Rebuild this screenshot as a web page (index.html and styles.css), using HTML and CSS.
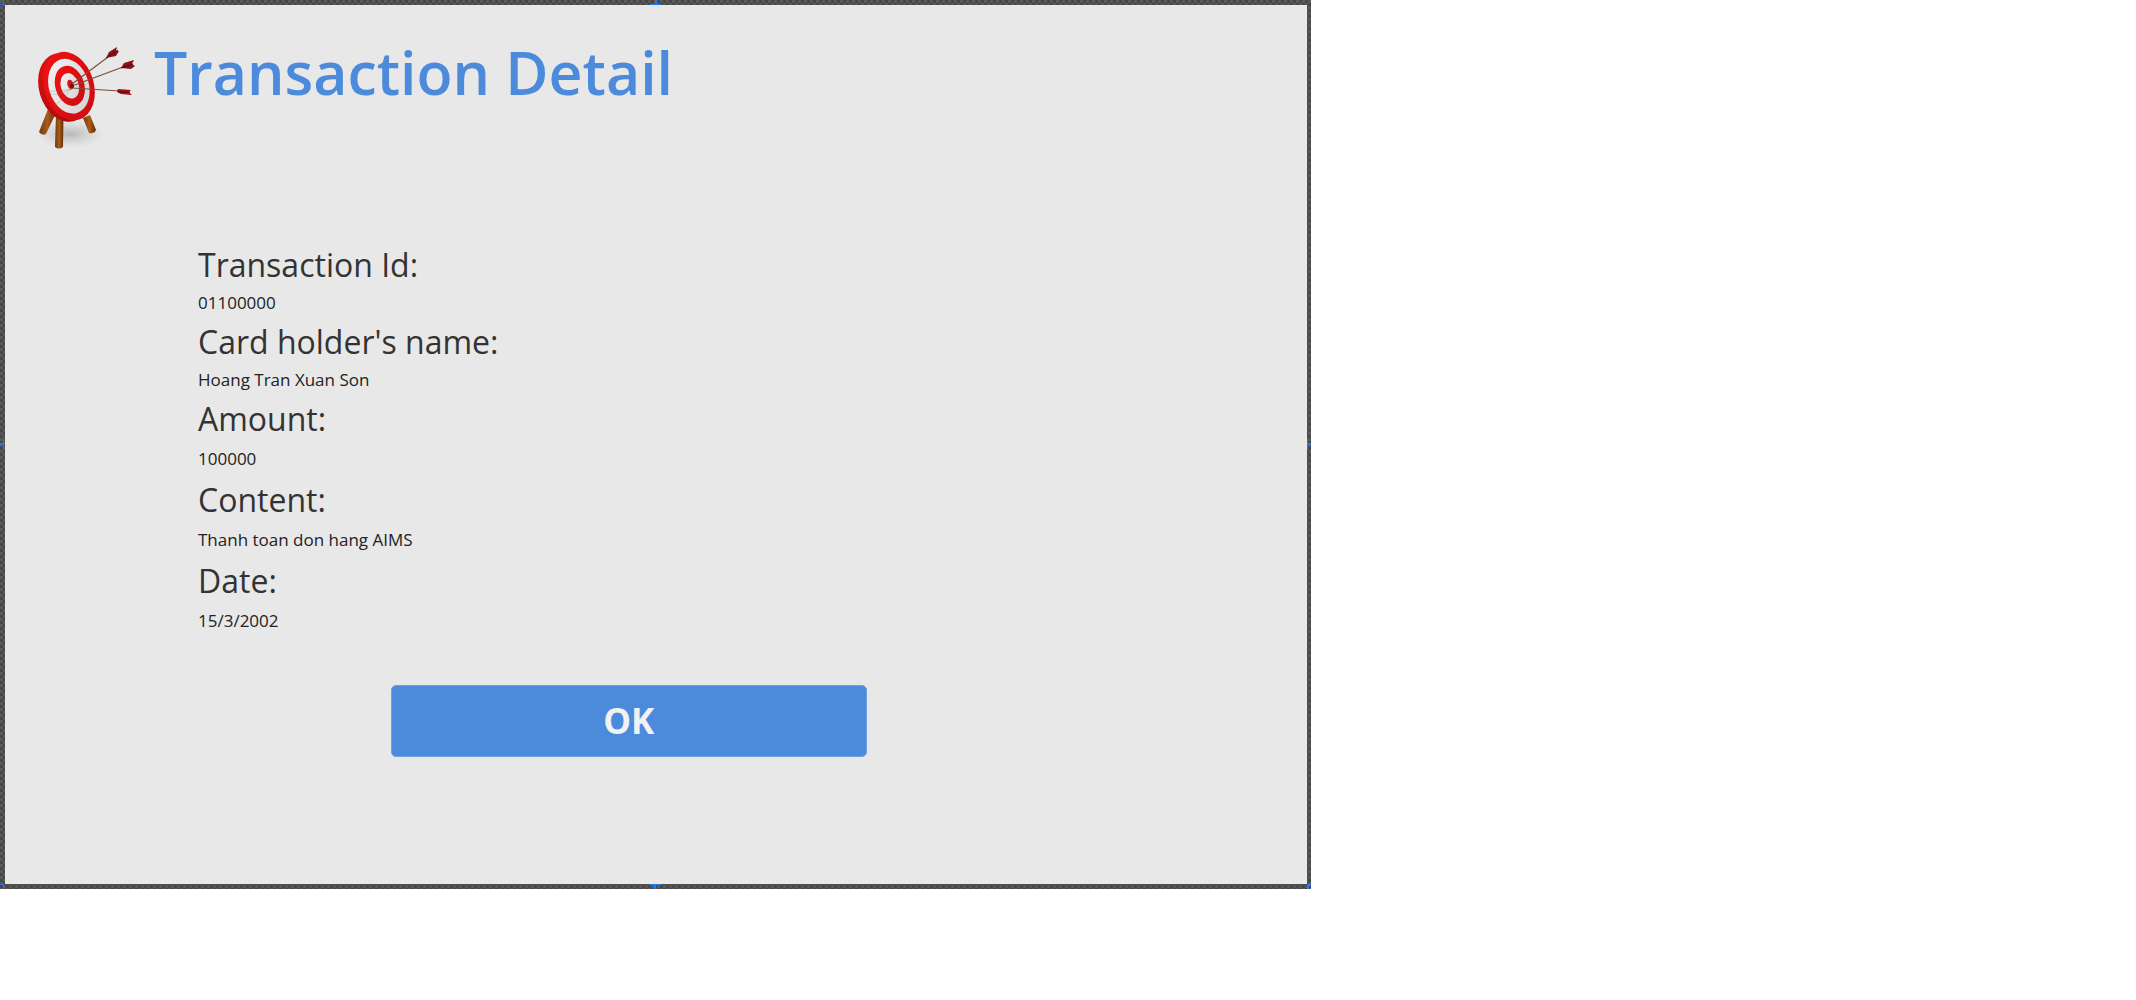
FILE: index.html
```html
<!DOCTYPE html>
<html lang="en">
<head>
<meta charset="utf-8">
<meta name="viewport" content="width=device-width, initial-scale=1">
<title>Transaction Detail</title>
<link rel="stylesheet" href="styles.css">
</head>
<body>
<main class="window">
  <span class="handle handle-corner handle-top-left"></span>
  <span class="handle handle-top"></span>
  <span class="handle handle-left"></span>
  <span class="handle handle-right"></span>
  <span class="handle handle-bottom"></span>
  <span class="handle handle-corner handle-bottom-left"></span>
  <span class="handle handle-corner handle-bottom-right"></span>
  <div class="screen">
    <header class="header">
      <svg class="logo" viewBox="0 0 130 130" aria-hidden="true">
        <defs>
          <linearGradient id="red" x1="0" y1="0" x2="1" y2="1"><stop offset="0" stop-color="#f31212"/><stop offset="1" stop-color="#c80d12"/></linearGradient>
          <linearGradient id="rim" x1="0" y1="0" x2="0" y2="1"><stop offset="0" stop-color="#e01010"/><stop offset="1" stop-color="#b00a0c"/></linearGradient>
          <linearGradient id="white" x1="0" y1="0" x2="1" y2="1"><stop offset="0" stop-color="#f4f4f4"/><stop offset="1" stop-color="#d2d2d2"/></linearGradient>
          <linearGradient id="wood" x1="0" y1="0" x2="1" y2="0"><stop offset="0" stop-color="#70390c"/><stop offset=".5" stop-color="#a85c1a"/><stop offset="1" stop-color="#5c2d08"/></linearGradient>
          <radialGradient id="shadow"><stop offset="0" stop-color="#888" stop-opacity=".5"/><stop offset="1" stop-color="#aaa" stop-opacity="0"/></radialGradient>
        </defs>
        <ellipse cx="50" cy="104" rx="34" ry="14" fill="url(#shadow)"/>
        <path d="M28 79 36 83 26 104Q22 106 19 102Z" fill="url(#wood)"/>
        <path d="M63 88 70 85 76 100Q74 104 69 103Z" fill="url(#wood)"/>
        <path d="M36 84H43.500L43 117Q39 120 35 117Z" fill="url(#wood)"/>
        <g transform="rotate(-17 46 57)">
          <ellipse cx="44" cy="57" rx="25" ry="35" fill="url(#rim)"/>
          <ellipse cx="49" cy="57" rx="25" ry="35" fill="url(#red)"/>
          <ellipse cx="49" cy="57" rx="20" ry="28" fill="url(#white)"/>
          <ellipse cx="50" cy="57" rx="14.500" ry="20.500" fill="url(#red)"/>
          <ellipse cx="50" cy="57" rx="9" ry="13" fill="url(#white)"/>
          <ellipse cx="51" cy="56" rx="3" ry="5" fill="#d41018"/>
        </g>
        <path d="M52 57 44 68 34 76M52 58 39 65 27 63M52 59 39 61 28 61" fill="none" stroke="#777" stroke-width="1" opacity=".3"/>
        <path d="M52 54 88 27M52 56 103 37M52 58 100 61" fill="none" stroke="#7c4f32" stroke-width="1.200"/>
        <circle cx="52" cy="56" r="2" fill="#651014"/>
        <path d="M86 28 89 22 97 17 96 21 99 21 96 26Z" fill="#8d1019"/>
        <path d="M101 38 104 33 114 30 112 34 115 36 111 39Z" fill="#8d1019"/>
        <path d="M97 62 98 59 111 60 109 62 112 65 101 64Z" fill="#a20d18"/>
        <path d="M86 28 98 20M101 38 113 34M98 62H110" stroke="#4b0b10" stroke-width="1"/>
      </svg>
      <h1 class="title">Transaction Detail</h1>
    </header>
    <dl class="details">
      <div class="row row-compact"><dt>Transaction Id:</dt><dd>01100000</dd></div>
      <div class="row row-compact"><dt>Card holder's name:</dt><dd>Hoang Tran Xuan Son</dd></div>
      <div class="row"><dt>Amount:</dt><dd>100000</dd></div>
      <div class="row"><dt>Content:</dt><dd>Thanh toan don hang AIMS</dd></div>
      <div class="row"><dt>Date:</dt><dd>15/3/2002</dd></div>
    </dl>
    <button class="ok" type="button">OK</button>
  </div>
</main>
</body>
</html>
```
FILE: styles.css
```css
* { box-sizing: border-box; }

body {
  margin: 0;
  background: #fff;
  color: #333;
  font-family: "Segoe UI", "Open Sans", "Noto Sans", sans-serif;
}

.window {
  position: relative;
  width: 61.36%;
  padding: 5px 4px 5px 5px;
  background: repeating-conic-gradient(#484848 0 25%, #585858 0 50%) 0 0 / 6px 6px;
}

.screen {
  padding: 25px 15px 127px;
  background: #e8e8e8;
}

.header {
  display: flex;
  align-items: flex-start;
  gap: 4px;
}

.logo {
  flex: none;
  width: 130px;
  height: 130px;
}

.title {
  margin: 0;
  color: #4c8bdc;
  font-size: 59px;
  font-weight: 600;
  line-height: 84px;
}

.details {
  margin: 83px 0 0 178px;
}

.row {
  display: grid;
  gap: 6px;
  padding-bottom: 7px;
}

.row dt {
  font-size: 32px;
  line-height: 44px;
}

.row dd {
  margin: 0;
  color: #222;
  font-size: 17px;
  line-height: 24px;
}

.row-compact {
  gap: 4px;
  padding-bottom: 5px;
}

.ok {
  display: block;
  width: 37.4%;
  height: 72px;
  margin: 45px 0 0 371px;
  border: 1px solid #6fa0e0;
  border-radius: 5px;
  background: #4c8bdc;
  color: #f2f2f2;
  font: inherit;
  font-size: 35px;
  font-weight: 700;
  line-height: 48px;
}

/* Selection handles on the window frame */
.handle {
  position: absolute;
  width: 11px;
  height: 5px;
  background:
    linear-gradient(#2479f5, #2479f5) center / 2px 100% no-repeat,
    linear-gradient(#2479f5, #2479f5) bottom / 100% 1px no-repeat;
}

.handle-top { top: 0; left: calc(50% - 5px); }
.handle-bottom { bottom: 0; left: calc(50% - 5px); transform: rotate(180deg); }
.handle-left,
.handle-right {
  top: calc(50% - 6px);
  width: 4px;
  height: 11px;
  background:
    linear-gradient(#2479f5, #2479f5) center / 100% 2px no-repeat,
    linear-gradient(#2479f5, #2479f5) left / 1px 100% no-repeat;
}
.handle-left { left: 0; transform: rotate(180deg); }
.handle-right { right: 0; }

.handle-corner {
  width: 4px;
  height: 5px;
  border: solid #2479f5;
  background: none;
}
.handle-top-left { top: 0; left: 0; border-width: 0 1px 1px 0; }
.handle-bottom-left { bottom: 0; left: 0; border-width: 1px 1px 0 0; }
.handle-bottom-right { right: 0; bottom: 0; border-width: 2px 0 0 2px; }
```
